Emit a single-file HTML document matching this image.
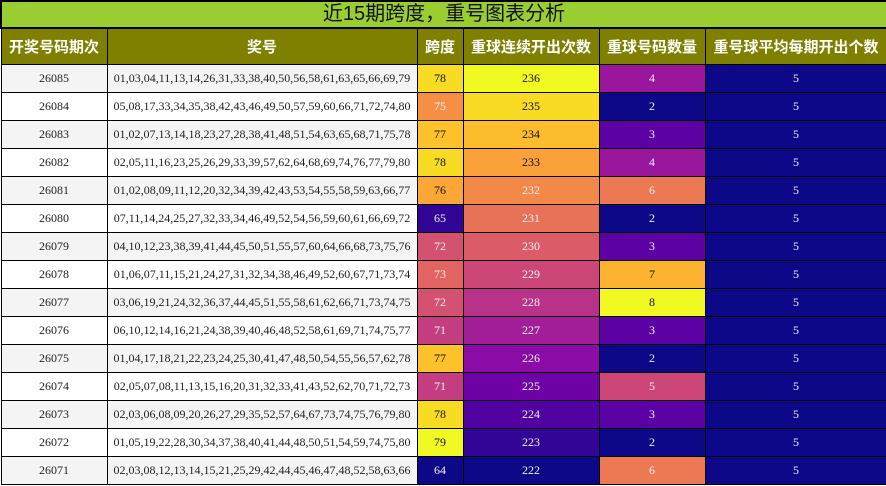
<!DOCTYPE html>
<html><head><meta charset="utf-8"><style>
html,body{margin:0;padding:0;width:886px;height:486px;overflow:hidden;background:#fff}
table{border-collapse:collapse;width:886px;table-layout:fixed}
td,th{border:1px solid #000;padding:0;text-align:center;overflow:hidden;white-space:nowrap}
thead td.tt{background:#9acd32;height:25px;font:20px/25px "Liberation Sans","Noto Sans CJK SC",sans-serif;color:#111;border-width:2px}
th{background:#808000;color:#fff;height:35px;font:bold 15px "Liberation Sans","Noto Sans CJK SC",sans-serif}
tbody td{height:27px;font:12px "Liberation Serif","DejaVu Serif",serif;color:#222}
tbody tr:nth-child(odd) td{background:#f4f4f4}
tbody tr:nth-child(even) td{background:#fff}
</style></head><body>
<table>
<colgroup><col style="width:106px"><col style="width:310px"><col style="width:46px"><col style="width:136px"><col style="width:106px"><col style="width:182px"></colgroup>
<thead>
<tr><td class="tt" colspan="6">近15期跨度，重号图表分析</td></tr>
<tr><th>开奖号码期次</th><th>奖号</th><th>跨度</th><th>重球连续开出次数</th><th>重球号码数量</th><th>重号球平均每期开出个数</th></tr>
</thead>
<tbody id="b">
<tr><td>26085</td><td>01,03,04,11,13,14,26,31,33,38,40,50,56,58,61,63,65,66,69,79</td><td>78</td><td>236</td><td>4</td><td>5</td></tr>
<tr><td>26084</td><td>05,08,17,33,34,35,38,42,43,46,49,50,57,59,60,66,71,72,74,80</td><td>75</td><td>235</td><td>2</td><td>5</td></tr>
<tr><td>26083</td><td>01,02,07,13,14,18,23,27,28,38,41,48,51,54,63,65,68,71,75,78</td><td>77</td><td>234</td><td>3</td><td>5</td></tr>
<tr><td>26082</td><td>02,05,11,16,23,25,26,29,33,39,57,62,64,68,69,74,76,77,79,80</td><td>78</td><td>233</td><td>4</td><td>5</td></tr>
<tr><td>26081</td><td>01,02,08,09,11,12,20,32,34,39,42,43,53,54,55,58,59,63,66,77</td><td>76</td><td>232</td><td>6</td><td>5</td></tr>
<tr><td>26080</td><td>07,11,14,24,25,27,32,33,34,46,49,52,54,56,59,60,61,66,69,72</td><td>65</td><td>231</td><td>2</td><td>5</td></tr>
<tr><td>26079</td><td>04,10,12,23,38,39,41,44,45,50,51,55,57,60,64,66,68,73,75,76</td><td>72</td><td>230</td><td>3</td><td>5</td></tr>
<tr><td>26078</td><td>01,06,07,11,15,21,24,27,31,32,34,38,46,49,52,60,67,71,73,74</td><td>73</td><td>229</td><td>7</td><td>5</td></tr>
<tr><td>26077</td><td>03,06,19,21,24,32,36,37,44,45,51,55,58,61,62,66,71,73,74,75</td><td>72</td><td>228</td><td>8</td><td>5</td></tr>
<tr><td>26076</td><td>06,10,12,14,16,21,24,38,39,40,46,48,52,58,61,69,71,74,75,77</td><td>71</td><td>227</td><td>3</td><td>5</td></tr>
<tr><td>26075</td><td>01,04,17,18,21,22,23,24,25,30,41,47,48,50,54,55,56,57,62,78</td><td>77</td><td>226</td><td>2</td><td>5</td></tr>
<tr><td>26074</td><td>02,05,07,08,11,13,15,16,20,31,32,33,41,43,52,62,70,71,72,73</td><td>71</td><td>225</td><td>5</td><td>5</td></tr>
<tr><td>26073</td><td>02,03,06,08,09,20,26,27,29,35,52,57,64,67,73,74,75,76,79,80</td><td>78</td><td>224</td><td>3</td><td>5</td></tr>
<tr><td>26072</td><td>01,05,19,22,28,30,34,37,38,40,41,44,48,50,51,54,59,74,75,80</td><td>79</td><td>223</td><td>2</td><td>5</td></tr>
<tr><td>26071</td><td>02,03,08,12,13,14,15,21,25,29,42,44,45,46,47,48,52,58,63,66</td><td>64</td><td>222</td><td>6</td><td>5</td></tr>
</tbody></table>
<script>
var P=["#0d0887","#41049d","#6a00a8","#8f0da4","#b12a90","#cc4778","#e16462","#f2844b","#fca636","#fcce25","#f0f921"];
function h(s){return [1,3,5].map(function(i){return parseInt(s.substr(i,2),16)})}
function pl(t){t=Math.max(0,Math.min(1,t));var x=t*10,i=Math.min(9,Math.floor(x)),f=x-i,a=h(P[i]),b=h(P[i+1]);
return "rgb("+a.map(function(v,k){return Math.round(v+(b[k]-v)*f)}).join(",")+")"}
var rows=document.getElementById("b").rows;
var cols=[[2,64,79],[3,222,236],[4,2,8],[5,5,5]];
for(var r=0;r<rows.length;r++){cols.forEach(function(c){var td=rows[r].cells[c[0]],v=+td.textContent;
var t=c[2]==c[1]?0:(v-c[1])/(c[2]-c[1]);td.style.background=pl(t);td.style.color=t>0.75?"#111":"#f1f1f1";});}
</script>
</body></html>
